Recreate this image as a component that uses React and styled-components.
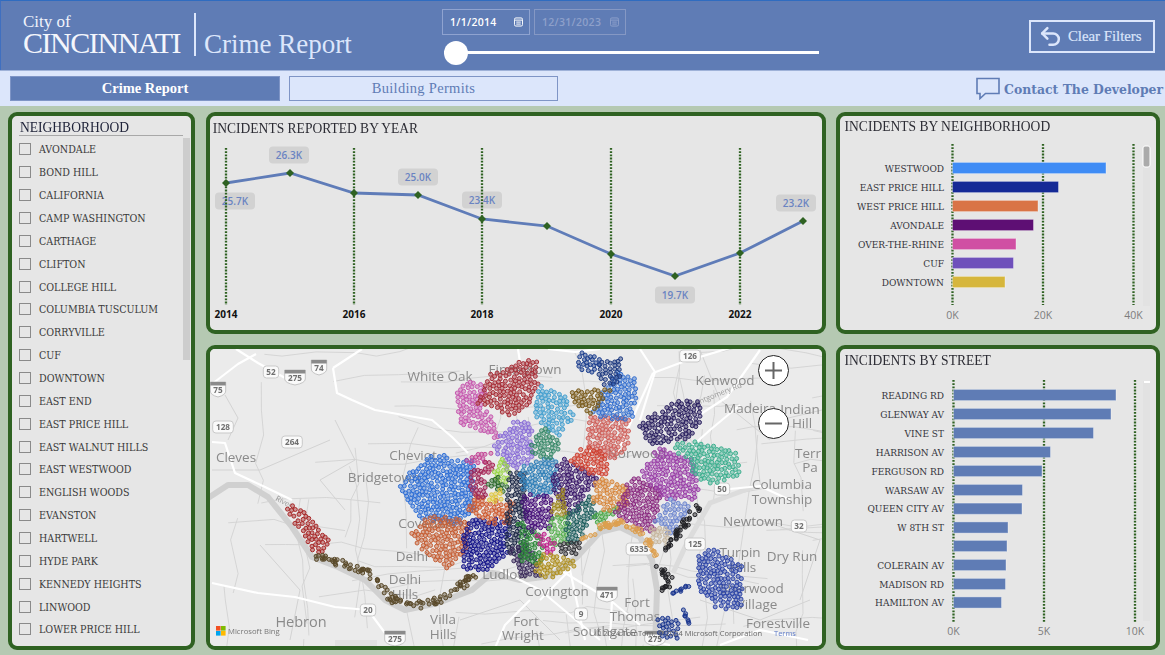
import React from "react";
import styled, { createGlobalStyle } from "styled-components";
import { Undo2 } from "lucide-react";

const SERIF = '"Liberation Serif", "Times New Roman", serif';
const SLAB = '"DejaVu Serif Condensed", "DejaVu Serif", "Liberation Serif", serif';
const SANS = '"Open Sans", "Noto Sans", sans-serif';
const GREEN = "#2f6222";
const BLUE = "#5f7cb5";

const Global = createGlobalStyle`
  html, body { margin: 0; padding: 0; background: #b5c9b2; }
  * { box-sizing: border-box; }
`;

const Page = styled.div`
  width: 1165px; height: 655px; overflow: hidden;
  display: flex; flex-direction: column;
  background: #b5c9b2; font-family: ${SERIF};
`;
const Header = styled.header`
  height: 70px; flex: none; display: flex; align-items: flex-start;
  background: ${BLUE}; border-top: 1px solid #2f6cc0; border-left: 1px solid #3f6fc0;
`;
const Brand = styled.div`
  width: 441px; flex: none; height: 100%; display: flex; align-items: flex-start;
  padding: 12px 0 0 22px; color: #fff;
`;
const Logo = styled.div`
  width: 171px; flex: none; display: flex; flex-direction: column;
`;
const LogoCity = styled.span`
  font-size: 17px; line-height: 17px; font-weight: 400; color: #f0f3fb;
`;
const LogoName = styled.span`
  font-size: 30px; line-height: 25px; letter-spacing: -1.45px; color: #f4f6fc; white-space: nowrap;
`;
const Divider = styled.div`
  width: 2px; height: 43px; margin-right: 9px; background: #dce6fb; flex: none;
`;
const ReportName = styled.div`
  font-size: 27px; line-height: 30px; margin: 16px 0 0 -1px; color: #dce6fb; white-space: nowrap;
`;
const DateArea = styled.div`
  width: 400px; flex: none; display: flex; flex-direction: column; padding-top: 8px;
`;
const DateRow = styled.div`
  display: flex; gap: 4px;
`;
const DateBox = styled.div`
  width: ${p => (p.$dim ? 92 : 88)}px; height: 26px; padding: 0 6px 0 7px; display: flex; align-items: center; justify-content: space-between;
  border: 1px solid ${p => (p.$dim ? "#8598c4" : "#8fa3d0")};
  color: ${p => (p.$dim ? "#8ea0ca" : "#fff")};
  font: 600 10.5px ${SANS}; letter-spacing: .3px;
`;
const Slider = styled.div`
  position: relative; width: 375px; height: 3px; margin: 16px 0 0 2px; background: #fff;
`;
const Thumb = styled.div`
  position: absolute; left: 0; top: -10px; width: 24px; height: 24px; border-radius: 50%; background: #fff;
`;
const ClearButton = styled.button`
  margin: 19px 0 0 187px; width: 126px; height: 33px; padding: 0 0 0 7px; flex: none;
  display: flex; align-items: center; gap: 5px;
  background: transparent; border: 2px solid #dce6fb; color: #dce6fb;
  font: 400 14.8px ${SERIF}; white-space: nowrap; -webkit-text-stroke: .2px #dce6fb;
`;
const Nav = styled.nav`
  height: 36px; flex: none; display: flex; align-items: flex-start; padding: 5px 0 0 10px; gap: 9px;
  background: #dce6fb; border-top: 1px solid #9fb2d8;
`;
const NavButton = styled.div`
  width: ${p => (p.$active ? 270 : 269)}px; height: 25px; padding-bottom: 1px; display: flex; align-items: center; justify-content: center;
  font-size: 14.5px; letter-spacing: ${p => (p.$active ? 0 : ".3px")}; font-weight: ${p => (p.$active ? 700 : 400)};
  color: ${p => (p.$active ? "#fff" : BLUE)};
  background: ${p => (p.$active ? BLUE : "#dce6fb")};
  border: 1px solid #7f95c6;
`;
const Contact = styled.div`
  margin-left: auto; height: 25px; display: flex; align-items: center; gap: 4px; margin-right: 2px;
  color: ${BLUE}; font: 700 13.8px ${SLAB}; white-space: nowrap;
`;
const Board = styled.main`
  flex: 1; display: grid; grid-template-columns: 187px 620px 324px; grid-template-rows: 222px 305px;
  column-gap: 10.5px; row-gap: 11px; padding: 6px 0 0 8px;
`;
const Panel = styled.section`
  position: relative; overflow: hidden; display: flex; flex-direction: column;
  background: #e6e6e6; border: 4px solid ${GREEN}; border-radius: 9px;
  ${p => p.$tall && "grid-row: span 2;"}
`;
const PanelTitle = styled.h2`
  margin: 0; height: 24px; flex: none; padding: ${p => p.$top}px 0 0 ${p => p.$pad}px;
  font: 400 14.8px/18px ${SERIF}; color: #2c2c34; white-space: nowrap;
  transform: scaleX(.915); transform-origin: left center;
`;
const SlicerHead = styled.div`
  margin: 0 8px 0 7px; height: 20px; flex: none; padding: 4px 0 0 1px;
  border-bottom: 1px solid #a8a8a8;
`;
const SlicerTitle = styled.h2`
  margin: 0; font: 400 14.8px/15px ${SERIF}; color: #20243a;
  transform: scaleX(.915); transform-origin: left center;
`;
const SlicerBody = styled.div`
  flex: 1; display: flex; min-height: 0; padding-left: 7px;
`;
const OptionList = styled.ul`
  list-style: none; margin: 0; padding: 2px 0 0; flex: 1; overflow: hidden;
`;
const Option = styled.li`
  height: 22.87px; display: flex; align-items: center; gap: 8px;
  font: 400 10.6px ${SLAB}; color: #3a3a3a; white-space: nowrap;
`;
const Check = styled.span`
  width: 12px; height: 12px; flex: none; border: 1px solid #8a8a8a; background: #e6e6e6;
`;
const Track = styled.div`
  width: 7px; flex: none; margin: 2px 1px 0 0; height: 222px; background: #cdcdcd;
`;
const Chart = styled.svg`
  flex: 1; width: 100%; min-height: 0; display: block;
`;
const MapSvg = styled.svg`
  width: 100%; height: 100%; display: block; filter: blur(.3px);
`;
const ZoomButton = styled.button`
  position: absolute; right: 33px; top: ${p => p.$top}px;
  width: 31px; height: 31px; padding: 0; border-radius: 50%;
  background: #fff; border: 1.5px solid #222; display: flex; align-items: center; justify-content: center;
`;

const NAMES = ["AVONDALE","BOND HILL","CALIFORNIA","CAMP WASHINGTON","CARTHAGE","CLIFTON","COLLEGE HILL","COLUMBIA TUSCULUM","CORRYVILLE","CUF","DOWNTOWN","EAST END","EAST PRICE HILL","EAST WALNUT HILLS","EAST WESTWOOD","ENGLISH WOODS","EVANSTON","HARTWELL","HYDE PARK","KENNEDY HEIGHTS","LINWOOD","LOWER PRICE HILL"];

const YEARS = [[226,183],[290,173],[354,193],[418,195],[482,219],[547,226],[611,254],[675,276],[740,253],[803,221]];
const YEAR_LABELS = [[226,"2014"],[354,"2016"],[482,"2018"],[611,"2020"],[740,"2022"]];
const DATA_LABELS = [[235,201,"25.7K"],[289,155,"26.3K"],[418,177,"25.0K"],[482,200,"23.4K"],[675,295,"19.7K"],[796,203,"23.2K"]];

const Dotted = ({ x, y1, y2 }) => (
  <line x1={x} x2={x} y1={y1} y2={y2} stroke={GREEN} strokeWidth="2.3" strokeDasharray="1.8 1.4" />
);

function YearChart() {
  return (
    <Chart viewBox="210 140 612 190" preserveAspectRatio="none">
      {DATA_LABELS.map(([x, y]) => (
        <rect key={x} x={x - 20} y={y - 8.5} width="40" height="17" rx="4" fill="#d2d2d2" />
      ))}
      {DATA_LABELS.map(([x, y, t]) => (
        <text key={t} x={x} y={y + 3.6} textAnchor="middle" fontFamily={SANS} fontSize="10" fontWeight="600" fill="#6a84c2">{t}</text>
      ))}
      {YEAR_LABELS.map(([x]) => <Dotted key={x} x={x} y1={148} y2={305} />)}
      <polyline points={YEARS.map(p => p.join(",")).join(" ")} fill="none" stroke="#5f7cb8" strokeWidth="2.8" />
      {YEARS.map(([x, y]) => (
        <path key={x} d={`M${x} ${y - 4}L${x + 4} ${y}L${x} ${y + 4}L${x - 4} ${y}Z`} fill={GREEN} />
      ))}
      {YEAR_LABELS.map(([x, t]) => (
        <text key={t} x={x} y={318} textAnchor="middle" fontFamily={SANS} fontSize="10" fontWeight="700" fill="#111">{t}</text>
      ))}
    </Chart>
  );
}

const HOOD_BARS = [["WESTWOOD",168,1106,"#3f8cf5"],["EAST PRICE HILL",187,1058.5,"#152a96"],["WEST PRICE HILL",206,1038,"#d97446"],["AVONDALE",225,1033.5,"#5e0f74"],["OVER-THE-RHINE",244,1016,"#d04fa3"],["CUF",263,1013.5,"#6f50bb"],["DOWNTOWN",282,1005,"#d6b63c"]];
const HOOD_TICKS = [[952.5,"0K"],[1043,"20K"],[1133.5,"40K"]];
const STREET_BARS = [["READING RD",395,1116],["GLENWAY AV",414,1111],["VINE ST",433,1093.5],["HARRISON AV",452,1050.5],["FERGUSON RD",471,1042],["WARSAW AV",490,1022.5],["QUEEN CITY AV",508.7,1022],["W 8TH ST",527.5,1008],["",546,1007],["COLERAIN AV",565,1006],["MADISON RD",584,1005.5],["HAMILTON AV",602.5,1001.5]];
const STREET_TICKS = [[953.5,"0K"],[1044,"5K"],[1135,"10K"]];

function BarChart({ bars, ticks, y1, y2, labelY, top, height, children }) {
  return (
    <Chart viewBox={`840 ${top} 316 ${height}`} preserveAspectRatio="none">
      {children}
      {ticks.map(([x]) => <Dotted key={x} x={x} y1={y1} y2={y2} />)}
      {bars.map(([name, y, end, color]) => (
        <g key={y}>
          <rect x={ticks[0][0]} y={y - 5.6} width={end - ticks[0][0]} height="11.2" fill={color || BLUE} stroke="#fff" strokeOpacity=".35" strokeWidth="1" />
          <text x={944} y={y + 3.6} textAnchor="end" fontFamily={SLAB} fontSize="10" fill="#33333b">{name}</text>
        </g>
      ))}
      {ticks.map(([x, t]) => (
        <text key={t} x={x} y={labelY} textAnchor="middle" fontFamily={SANS} fontSize="10.5" fill="#7d7d7d">{t}</text>
      ))}
    </Chart>
  );
}

/* ---------- map drawing ---------- */
function rng(seed) {
  let a = seed;
  return () => {
    a |= 0; a = (a + 0x6d2b79f5) | 0;
    let t = Math.imul(a ^ (a >>> 15), 1 | a);
    t = (t + Math.imul(t ^ (t >>> 7), 61 | t)) ^ t;
    return ((t ^ (t >>> 14)) >>> 0) / 4294967296;
  };
}
const inside = (x, y, poly) => {
  let c = false;
  for (let i = 0, j = poly.length - 1; i < poly.length; j = i++) {
    const [xi, yi] = poly[i], [xj, yj] = poly[j];
    if ((yi > y) !== (yj > y) && x < ((xj - xi) * (y - yi)) / (yj - yi) + xi) c = !c;
  }
  return c;
};
const area = poly => {
  let s = 0;
  poly.forEach(([x, y], i) => { const [u, v] = poly[(i + 1) % poly.length]; s += x * v - u * y; });
  return Math.abs(s / 2);
};
const R = (a, b, c, d) => [[a, b], [c, b], [c, d], [a, d]];
const AREAS = [
  ["#2f6fd6", [[400,487],[432,455],[472,463],[472,510],[458,523],[425,517],[408,500]]],
  ["#c65f35", [[412,535],[428,517],[468,522],[465,547],[448,567],[432,557]]],
  ["#14148a", [[465,533],[472,520],[508,522],[505,553],[485,570],[465,567]]],
  ["#cf5a30", [[468,510],[475,497],[495,503],[512,503],[510,520],[492,523]]],
  ["#a82a2a", [[288,510],[295,505],[330,540],[322,553],[312,547]]],
  ["#c75ab0", [[457,390],[472,382],[485,387],[480,410],[492,418],[497,437],[482,430],[462,423]]],
  ["#a82f38", [[478,403],[492,377],[522,362],[535,362],[537,390],[523,407],[510,415],[495,405]]],
  ["#8a6ed8", [[495,443],[515,423],[530,425],[532,457],[510,470]]],
  ["#c44a98", [[468,458],[490,453],[485,462],[470,465]]],
  ["#a82858", R(484,462,492,472)],
  ["#9cd848", [[496,470],[500,460],[508,465],[506,482],[498,480]]],
  ["#2d6a2d", [[488,483],[498,476],[506,490],[495,490]]],
  ["#e0c840", R(490,492,500,500)],
  ["#a02858", [[468,475],[480,470],[486,497],[474,497]]],
  ["#1e2a48", [[510,473],[525,475],[525,555],[508,553]]],
  ["#3a2a5a", [[510,550],[528,545],[540,575],[522,575]]],
  ["#2e8a3a", [[520,520],[540,540],[543,563],[522,560]]],
  ["#2f7fb8", [[520,470],[553,457],[557,487],[540,497],[527,493]]],
  ["#47107a", [[523,497],[550,497],[550,527],[530,530]]],
  ["#3c1a6b", [[552,483],[563,460],[597,477],[577,507],[567,517],[557,493]]],
  ["#a08a20", [[552,513],[563,490],[568,517]]],
  ["#58b050", [[550,520],[567,517],[567,540],[553,543]]],
  ["#1f5f5f", [[567,517],[590,497],[595,513],[577,540],[567,540]]],
  ["#c0208c", [[538,533],[555,543],[553,553],[542,550]]],
  ["#b09020", [[537,573],[543,553],[563,557],[573,563],[553,577]]],
  ["#333338", R(560,543,578,553)],
  ["#4aa848", [[595,513],[620,508],[600,527]]],
  ["#d8873c", [[592,497],[600,480],[627,487],[627,503],[607,510]]],
  ["#8a2a80", [[627,487],[637,480],[660,490],[653,530],[643,530],[617,513]]],
  ["#9a3fa8", [[643,473],[660,450],[693,463],[697,497],[663,497]]],
  ["#3fb090", [[673,447],[690,442],[733,453],[740,475],[710,482],[693,473],[690,457]]],
  ["#6f88d0", [[657,520],[670,500],[690,507],[670,533]]],
  ["#c8b8a0", R(652,530,668,543)],
  ["#2a2060", [[640,427],[673,403],[700,403],[700,420],[687,437],[653,443]]],
  ["#2e46a8", [[700,557],[713,550],[740,567],[740,607],[720,607],[700,587]]],
  ["#1c3890", R(660,620,677,637)],
  ["#d0605a", [[590,417],[627,420],[627,447],[613,457],[590,447]]],
  ["#d04030", [[570,460],[590,447],[607,457],[607,473],[587,473]]],
  ["#3570d0", [[593,413],[617,373],[635,380],[632,417],[607,417]]],
  ["#1e3a80", [[600,363],[622,360],[617,383],[602,383]]],
  ["#1c3f8f", [[577,360],[583,353],[598,360],[597,372],[583,370]]],
  ["#7a5a1a", [[568,393],[610,388],[590,413],[577,403]]],
  ["#45a0d0", [[535,403],[543,388],[563,397],[573,417],[557,433],[540,420]]],
  ["#3a8a6a", [[530,453],[543,427],[560,443],[553,457]]],
];
const BANDS = [
  ["#5a4a2a", 105, 3.6, [[312,553],[338,563],[365,570],[385,593],[405,607],[432,603],[458,590],[475,573]]],
  ["#dda050", 55, 2.6, [[580,543],[600,527],[620,522],[640,532],[660,557]]],
  ["#222226", 36, 3.2, [[663,553],[680,530],[697,507]]],
  ["#222226", 20, 3, [[657,563],[670,580],[663,590]]],
  ["#1c3890", 9, 1.5, [[672,594],[693,583]]],
  ["#1c3890", 7, 1.5, [[683,606],[690,625]]],
];
function buildDots() {
  const r = rng(17), out = [];
  const GAP = 3.3 * 3.3;
  AREAS.forEach(([c, poly]) => {
    const xs = poly.map(p => p[0]), ys = poly.map(p => p[1]);
    const x0 = Math.min(...xs) - 3, x1 = Math.max(...xs) + 3, y0 = Math.min(...ys) - 3, y1 = Math.max(...ys) + 3;
    const n = Math.round(area(poly) / 15) + 4;
    const mine = [];
    let tries = 0;
    while (mine.length < n && tries < n * 30) {
      tries++;
      const x = x0 + r() * (x1 - x0), y = y0 + r() * (y1 - y0);
      const jit = 2.6;
      if (!inside(x - jit + r() * 2 * jit, y - jit + r() * 2 * jit, poly)) continue;
      if (mine.some(m => (m[0] - x) ** 2 + (m[1] - y) ** 2 < GAP)) continue;
      mine.push([x, y]);
    }
    mine.forEach(([x, y]) => out.push([x, y, c]));
  });
  BANDS.forEach(([c, n, j, line]) => {
    for (let i = 0; i < n; i++) {
      const t = r() * (line.length - 1), k = Math.floor(t), f = t - k;
      const a = line[k], b = line[k + 1];
      out.push([a[0] + (b[0] - a[0]) * f + (r() - .5) * 2 * j, a[1] + (b[1] - a[1]) * f + (r() - .5) * 2 * j, c]);
    }
  });
  return out;
}
function buildGrid() {
  const r = rng(5), lines = [];
  for (let i = 0; i < 84; i++) {
    const vertical = i % 2 === 0;
    let x = 212 + r() * 610, y = 350 + r() * 296;
    const pts = [[x, y]];
    const steps = 3 + Math.floor(r() * 4);
    for (let s = 0; s < steps; s++) {
      if (vertical) { x += (r() - .5) * 16; y += 14 + r() * 26; }
      else { x += 16 + r() * 30; y += (r() - .5) * 14; }
      pts.push([x, y]);
    }
    lines.push(pts.map(p => p.map(v => v.toFixed(1)).join(",")).join(" "));
  }
  return lines;
}
const DOTS = buildDots();
const GRID = buildGrid();
const ROADS = [
  "236,349 258,363 287,379", "333,368 362,349", "212,384 238,364 256,354",
  "333,368 337,393 352,400 375,410 432,420 452,437 468,453",
  "212,442 225,443 235,473 265,487 292,500",
  "212,583 258,593 295,597 335,607 368,610 385,633 395,648",
  "653,373 680,363 733,347", "687,423 727,397 760,350", "617,453 653,373",
  "548,349 575,352 600,349", "518,349 522,375", "540,600 570,570 585,640",
  "640,625 610,600 560,570", "720,490 760,486 790,500", "808,640 760,630 720,645",
  "690,448 710,430 740,405", "610,640 612,600", "640,349 655,372 640,420",
  "500,570 540,590 600,640", "645,640 670,645", "530,600 505,625 495,648",
];
const GREY_LINES = [
  "335,420 355,460 320,480 345,510", "212,470 260,470 330,440", "225,395 238,418 228,440",
  "260,545 300,590 290,640", "460,620 520,600 560,640", "700,600 760,620 810,600",
  "780,420 822,410", "760,520 820,540 800,600", "700,350 720,400 770,440",
];
const PLACES = [
  ["White Oak",440,381,14],["Cheviot",413,460,14],["Bridgetown",384,482,14],["Cleves",236,462,14],["Covedale",427,528,14],
  ["Delhi",412,561,14],["Delhi",405,584,14],["Hills",405,599,14],["Hebron",301,627,15],["Villa",443,624,14],["Hills",443,639,14],
  ["Ludlow",505,579,14],["Fort",526,626,14],["Wright",523,640,14],["Covington",557,596,14],["Fort",637,607,14],["Thomas",635,621,14],
  ["Southgate",605,636,14],["Forestville",778,628,14],["Sherwood",752,593,14],["Village",757,609,14],["Turpin",740,557,14],["Hills",743,572,14],
  ["Dry Run",792,561,14],["Newtown",753,526,14],["Columbia",782,489,14],["Township",782,504,14],["Kenwood",725,385,14],["Madeira",750,413,14],
  ["Indian",800,414,14],["Hill",802,428,14],["Norwood",637,458,14],["Terr",808,458,14],["Pa",810,472,14],["Finneytown",525,374,14],
];
const SHIELDS = [
  ["52",271,372],["275",295,377,1],["74",319,367,1],["75",218,389,1],["128",223,427],["264",292,442],["20",368,610],["275",395,638,1],
  ["126",690,356],["50",722,489],["32",799,526],["6335",639,549],["125",695,544],["471",607,594,1],["9",581,614],["275",655,638,1],
];

const Shield = ({ t, x, y, i }) => {
  const w = Math.max(13, t.length * 5.2 + 5);
  if (!i) {
    return (
      <g>
        <rect x={x - w / 2} y={y - 6} width={w} height="12" rx="3.2" fill="#fafafa" stroke="#c9c9c9" />
        <text x={x} y={y + 3} textAnchor="middle" fontFamily={SANS} fontSize="8.2" fontWeight="700" fill="#6f6f6f">{t}</text>
      </g>
    );
  }
  const h = w / 2;
  return (
    <g>
      <path d={`M${x - h} ${y - 7}H${x + h}V${y + 2}Q${x + h} ${y + 6} ${x} ${y + 8}Q${x - h} ${y + 6} ${x - h} ${y + 2}Z`} fill="#fafafa" stroke="#c4c4c4" />
      <path d={`M${x - h} ${y - 7}H${x + h}V${y - 3.5}H${x - h}Z`} fill="#8a8a8a" />
      <text x={x} y={y + 3.6} textAnchor="middle" fontFamily={SANS} fontSize="8.2" fontWeight="700" fill="#6f6f6f">{t}</text>
    </g>
  );
};

function CityMap() {
  return (
    <MapSvg viewBox="210 349 612 297" preserveAspectRatio="none">
      <rect x="210" y="349" width="612" height="297" fill="#ebebeb" />
      {GRID.map((p, i) => <polyline key={i} points={p} fill="none" stroke="#d3d3d3" strokeWidth=".9" />)}
      {GREY_LINES.map((p, i) => <polyline key={i} points={p} fill="none" stroke="#d3d3d3" strokeWidth="1" />)}
      <polyline points="205,500 228,485 248,485 268,497 292,527 312,557 338,567 365,580 385,600 405,610 438,603 472,590 492,573 520,580 550,576 577,557 600,532 620,527 640,537 652,560 657,590 655,648" fill="none" stroke="#d0d0d0" strokeWidth="6" strokeLinejoin="round" />
      <polyline points="673,573 687,543 710,503 753,487" fill="none" stroke="#dcdcdc" strokeWidth="5" />
      <path d="M335 640h42v6h-42z" fill="#e1e1e1" />
      {ROADS.map((p, i) => <polyline key={i} points={p} fill="none" stroke="#fff" strokeWidth="2.2" strokeLinejoin="round" />)}
      {PLACES.map(([t, x, y, s], i) => (
        <text key={i} x={x} y={y} textAnchor="middle" fontFamily={SANS} fontSize={s - .5} fill="#8a8a8a">{t}</text>
      ))}
      <text x="275" y="500" fontFamily={SANS} fontSize="7.5" fill="#9a9a9a" transform="rotate(28 275 500)">River</text>
      <text x="690" y="408" fontFamily={SANS} fontSize="7.5" fill="#9a9a9a" transform="rotate(-22 690 408)">Montgomery Rd</text>
      {SHIELDS.map(([t, x, y, i]) => <Shield key={t + x} t={t} x={x} y={y} i={i} />)}
      {DOTS.map(([x, y, c], i) => (
        <circle key={i} cx={x.toFixed(1)} cy={y.toFixed(1)} r="2" fill={c} fillOpacity=".45" stroke={c} strokeWidth="1" />
      ))}
      <rect x="216" y="626" width="4.6" height="4.6" fill="#f25022" />
      <rect x="221" y="626" width="4.6" height="4.6" fill="#7fba00" />
      <rect x="216" y="631" width="4.6" height="4.6" fill="#00a4ef" />
      <rect x="221" y="631" width="4.6" height="4.6" fill="#ffb900" />
      <text x="228" y="634" fontFamily={SANS} fontSize="7.7" fill="#777">Microsoft Bing</text>
      <text x="595" y="636" fontFamily={SANS} fontSize="7.5" fill="#666">© 2024 TomTom, © 2024 Microsoft Corporation</text>
      <text x="774" y="636" fontFamily={SANS} fontSize="7.5" fill="#5f7cc8">Terms</text>
    </MapSvg>
  );
}

const CalendarIcon = ({ color }) => (
  <svg width="9" height="10" viewBox="0 0 10 11" fill="none" stroke={color} strokeWidth="1.1">
    <rect x=".5" y="1" width="9" height="9" rx="1.6" />
    <path d="M1 3.4h8M2.5 5.6h5M2.5 7.8h5" />
  </svg>
);
const ChatIcon = () => (
  <svg width="24" height="23" viewBox="0 0 24 23" fill="none" stroke={BLUE} strokeWidth="1.6">
    <path d="M1 1.5h22v15H9.5L4 21.5v-5H1z" />
  </svg>
);

export default function App() {
  return (
    <Page>
      <Global />
      <Header>
        <Brand>
          <Logo>
            <LogoCity>City of</LogoCity>
            <LogoName>CINCINNATI</LogoName>
          </Logo>
          <Divider />
          <ReportName>Crime Report</ReportName>
        </Brand>
        <DateArea>
          <DateRow>
            <DateBox>1/1/2014<CalendarIcon color="#fff" /></DateBox>
            <DateBox $dim>12/31/2023<CalendarIcon color="#8ea0ca" /></DateBox>
          </DateRow>
          <Slider><Thumb /></Slider>
        </DateArea>
        <ClearButton><Undo2 size={25} strokeWidth={2.4} color="#dce6fb" />Clear Filters</ClearButton>
      </Header>
      <Nav>
        <NavButton $active>Crime Report</NavButton>
        <NavButton>Building Permits</NavButton>
        <Contact><ChatIcon />Contact The Developer</Contact>
      </Nav>
      <Board>
        <Panel $tall>
          <SlicerHead><SlicerTitle>NEIGHBORHOOD</SlicerTitle></SlicerHead>
          <SlicerBody>
            <OptionList>
              {NAMES.map(n => <Option key={n}><Check />{n}</Option>)}
            </OptionList>
            <Track />
          </SlicerBody>
        </Panel>
        <Panel>
          <PanelTitle $pad={3} $top={3}>INCIDENTS REPORTED BY YEAR</PanelTitle>
          <YearChart />
        </Panel>
        <Panel>
          <PanelTitle $pad={5} $top={1}>INCIDENTS BY NEIGHBORHOOD</PanelTitle>
          <BarChart bars={HOOD_BARS} ticks={HOOD_TICKS} y1={144} y2={305} labelY={319} top={140} height={190}>
            <rect x="1143" y="146" width="7" height="160" fill="#e2e2e2" />
            <rect x="1143" y="146" width="7" height="21" rx="2" fill="#aaa" stroke="#fff" />
          </BarChart>
        </Panel>
        <Panel>
          <CityMap />
          <ZoomButton $top={6}>
            <svg width="19" height="19" viewBox="0 0 19 19" stroke="#666" strokeWidth="2"><path d="M1 9.5h17M9.5 1v17" /></svg>
          </ZoomButton>
          <ZoomButton $top={59}>
            <svg width="19" height="19" viewBox="0 0 19 19" stroke="#666" strokeWidth="2"><path d="M1 9.5h17" /></svg>
          </ZoomButton>
        </Panel>
        <Panel>
          <PanelTitle $pad={5} $top={2}>INCIDENTS BY STREET</PanelTitle>
          <BarChart bars={STREET_BARS} ticks={STREET_TICKS} y1={380} y2={622} labelY={635} top={373} height={273}>
            <rect x="1143" y="381" width="7" height="240" fill="#e2e2e2" />
            <rect x="1144" y="381" width="6" height="2" fill="#fff" />
          </BarChart>
        </Panel>
      </Board>
    </Page>
  );
}
